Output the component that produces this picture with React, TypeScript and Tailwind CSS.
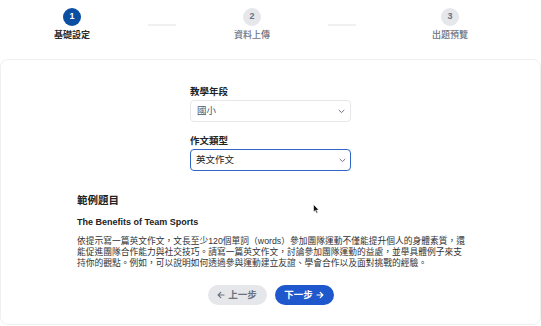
import React from "react";

const font = { fontFamily: '"Liberation Sans", "Noto Sans CJK TC", sans-serif' };

function Step({ n, label, active }: { n: number; label: string; active?: boolean }) {
  return (
    <div className="flex w-[60px] shrink-0 flex-col items-center">
      <div
        className={
          active
            ? "flex h-[18px] w-[18px] items-center justify-center rounded-full bg-[#0b4ea2] text-[9px] font-bold text-white"
            : "flex h-[18px] w-[18px] items-center justify-center rounded-full bg-[#e6e7eb] text-[9px] font-bold text-[#6b7280]"
        }
      >
        {n}
      </div>
      <div
        className={
          active
            ? "mt-[3px] whitespace-nowrap text-[9px] font-bold leading-[12px] text-[#2b2b2b]"
            : "mt-[3px] whitespace-nowrap text-[9px] font-medium leading-[12px] text-[#6b7280]"
        }
      >
        {label}
      </div>
    </div>
  );
}

function Chevron() {
  return (
    <svg width="7" height="5" viewBox="0 0 7 5" fill="none">
      <path d="M1 1.2 L3.5 3.6 L6 1.2" stroke="#6b7280" strokeWidth="1" strokeLinecap="round" strokeLinejoin="round" />
    </svg>
  );
}

export default function App() {
  return (
    <div className="relative h-[326px] w-[541px] overflow-hidden bg-white" style={font}>
      {/* Stepper */}
      <div className="flex h-[59px] items-start pt-[8px]">
        <div className="ml-[42px]">
          <Step n={1} label="基礎設定" active />
        </div>
        <div className="ml-[46px] mt-[16px] h-[2px] w-[28px] bg-[#f0f0f1]" />
        <div className="ml-[46px]">
          <Step n={2} label="資料上傳" />
        </div>
        <div className="ml-[46px] mt-[16px] h-[2px] w-[28px] bg-[#f0f0f1]" />
        <div className="ml-[64px]">
          <Step n={3} label="出題預覽" />
        </div>
      </div>

      {/* Card */}
      <div className="h-[266px] rounded-lg border border-[#f0f0f0] bg-white">
        <div className="mx-auto w-[161px] pt-[24px]">
          <div className="text-[9.5px] font-bold leading-[16px] text-[#222]">教學年段</div>
          <div className="flex h-[22px] items-center justify-between rounded-[4px] border border-[#e7e7ea] bg-white pl-[6px] pr-[5px]">
            <span className="text-[9.5px] text-[#4b5563]">國小</span>
            <Chevron />
          </div>
          <div className="mt-[11px] text-[9.5px] font-bold leading-[16px] text-[#222]">作文類型</div>
          <div className="flex h-[22px] items-center justify-between rounded-[4px] border-[1.5px] border-[#2f66c8] bg-white pl-[5px] pr-[4px]">
            <span className="text-[9.5px] text-[#222]">英文作文</span>
            <Chevron />
          </div>
        </div>

        <div className="pl-[76px] pr-[72px]">
          <div className="mt-[21px] text-[10.5px] font-bold leading-[16px] text-[#222]">範例題目</div>
          <div className="mt-[7px] text-[9px] font-bold leading-[14px] text-[#222]">The Benefits of Team Sports</div>
          <p className="mt-[7px] text-[8.75px] leading-[11px] text-[#333]">
            依提示寫一篇英文作文，文長至少120個單詞（words）參加團隊運動不僅能提升個人的身體素質，還能促進團隊合作能力與社交技巧。請寫一篇英文作文，討論參加團隊運動的益處，並舉具體例子來支持你的觀點。例如，可以說明如何透過參與運動建立友誼、學會合作以及面對挑戰的經驗。
          </p>
        </div>

        <div className="mt-[16px] flex justify-center gap-[8px]">
          <button className="flex h-[20px] w-[59px] items-center justify-center gap-[3px] rounded-full bg-[#e5e7eb] text-[9.5px] font-semibold text-[#6b7280]">
            <svg width="8" height="8" viewBox="0 0 8 8" fill="none">
              <path d="M7 4 H1.3 M3.8 1.3 L1.1 4 L3.8 6.7" stroke="#6b7280" strokeWidth="1.2" strokeLinecap="round" strokeLinejoin="round" />
            </svg>
            上一步
          </button>
          <button className="flex h-[20px] w-[59px] items-center justify-center gap-[3px] rounded-full bg-[#1f58cc] text-[9.5px] font-semibold text-white">
            下一步
            <svg width="8" height="8" viewBox="0 0 8 8" fill="none">
              <path d="M1 4 H6.7 M4.2 1.3 L6.9 4 L4.2 6.7" stroke="#ffffff" strokeWidth="1.2" strokeLinecap="round" strokeLinejoin="round" />
            </svg>
          </button>
        </div>
      </div>

      {/* mouse cursor */}
      <svg className="absolute left-[313px] top-[204px]" width="7" height="10" viewBox="0 0 7 10">
        <path d="M0.5 0.5 L0.5 8 L2.3 6.4 L3.6 9.3 L4.8 8.8 L3.6 6 L6 6 Z" fill="#111" stroke="#fff" strokeWidth="0.6" />
      </svg>
    </div>
  );
}
